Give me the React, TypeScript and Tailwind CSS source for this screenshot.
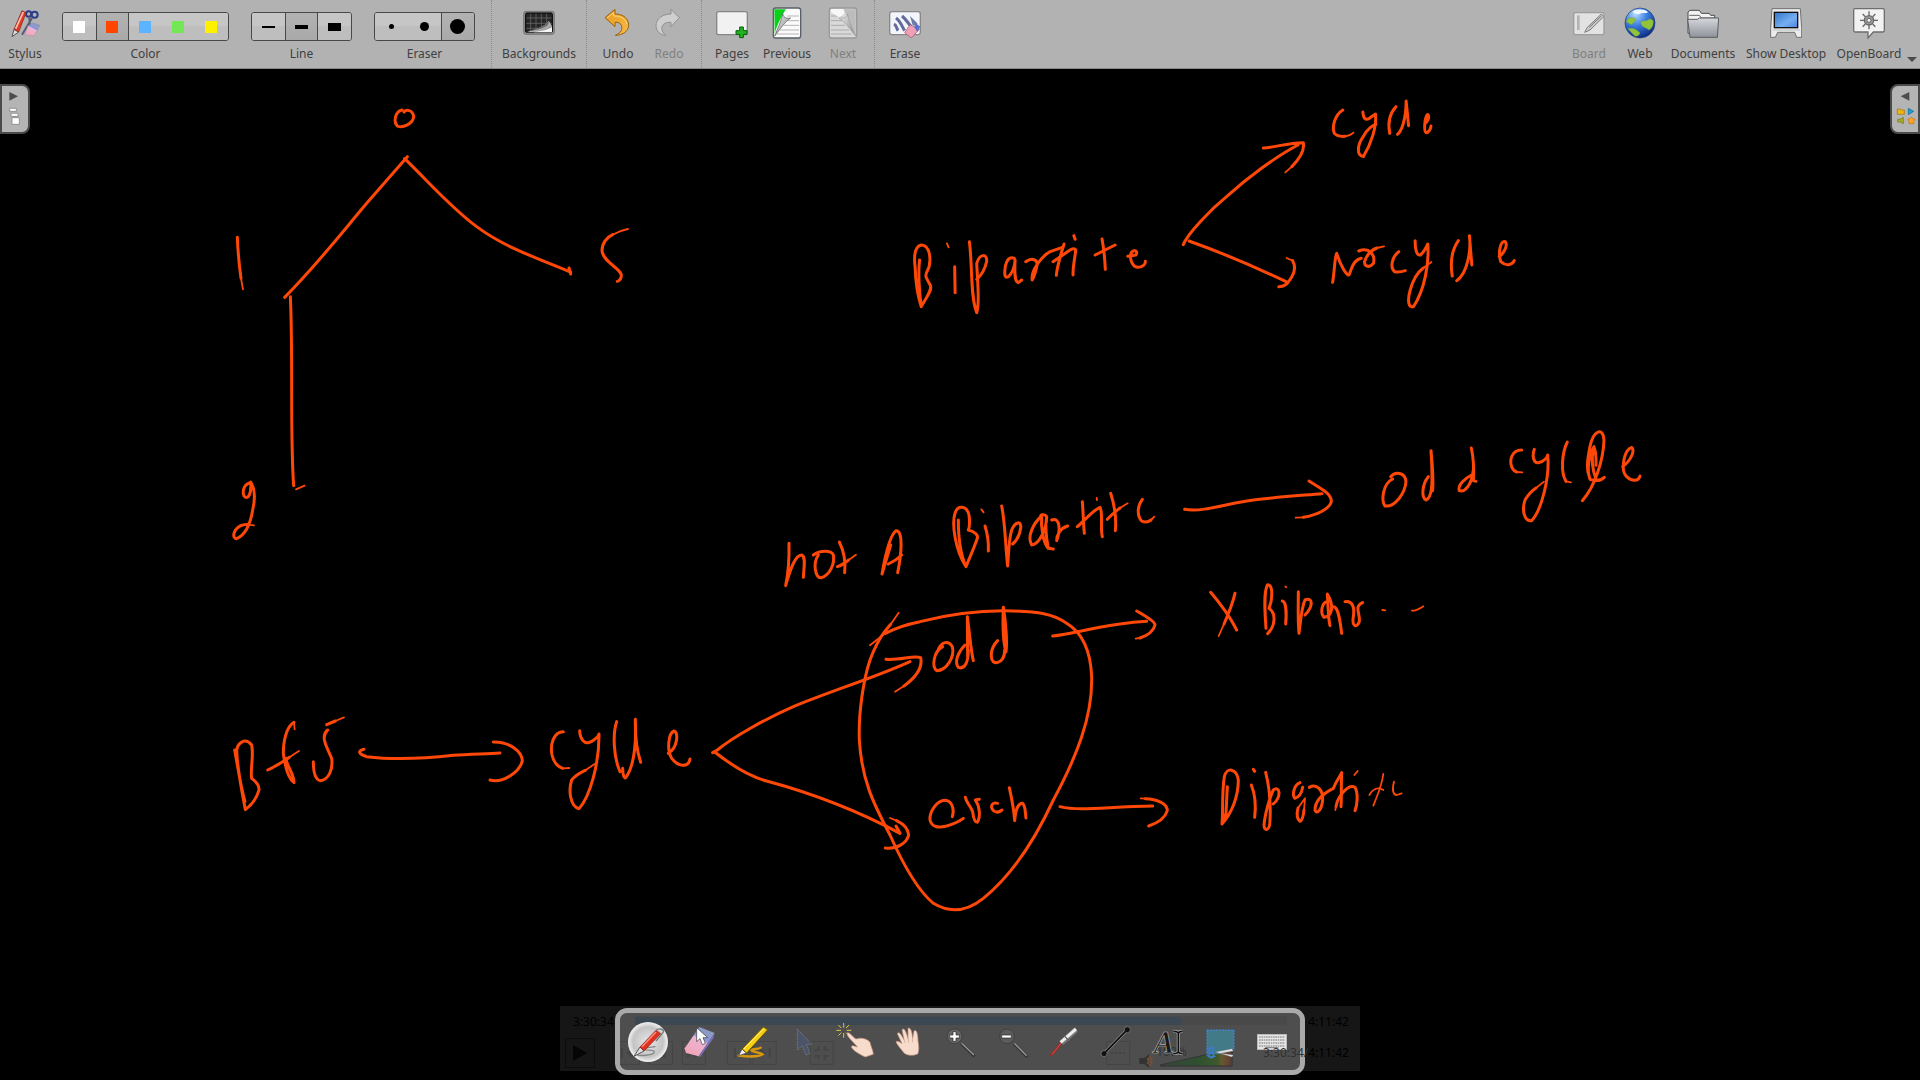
import React from 'react';

type IconProps = { box: string; children: React.ReactNode; size?: 'bar' | 'tool' };

const Icon = ({ box, children, size = 'bar' }: IconProps) => (
  <svg viewBox={box} aria-hidden="true" className={size === 'bar' ? 'size-8' : 'size-10'}>
    {children}
  </svg>
);

type ActionProps = { label: string; width: string; disabled?: boolean; children: React.ReactNode };

const Action = ({ label, width, disabled, children }: ActionProps) => (
  <button
    type="button"
    disabled={disabled}
    className={`flex shrink-0 flex-col items-center gap-[7px] pt-[7px] ${width} ${disabled ? 'text-[#808080]' : 'text-[#404040]'}`}
  >
    {children}
    <span className="text-xs leading-4 whitespace-nowrap">{label}</span>
  </button>
);

type Option = { name: string; mark: React.ReactNode; active?: boolean; edge?: string };

const Segments = ({ label, options }: { label: string; options: Option[] }) => (
  <div role="group" aria-label={label} className="flex shrink-0 flex-col items-center gap-[5px] pt-3 text-[#404040]">
    <div className="flex h-[29px] overflow-hidden rounded-[3px] border border-[#484848]">
      {options.map((o) => (
        <button
          key={o.name}
          type="button"
          aria-label={o.name}
          aria-pressed={!!o.active}
          className={`flex w-[33px] items-center justify-center border-[#484848] ${o.edge ?? ''} ${
            o.active
              ? 'bg-linear-to-b from-[#b2b2b2] to-[#a9a9a9]'
              : 'bg-linear-to-b from-[#c6c6c6] from-50% to-[#bebebe] to-50%'
          }`}
        >
          {o.mark}
        </button>
      ))}
    </div>
    <span className="text-xs leading-4">{label}</span>
  </div>
);

const Divider = () => <div className="w-px shrink-0 self-stretch border-l border-dotted border-[#8c8c8c]" />;

const colors: Option[] = [
  { name: 'White', mark: <span className="mr-px size-3 bg-white" /> },
  { name: 'Orange', mark: <span className="mr-px size-3 bg-[#ff4500]" />, active: true, edge: 'border-x' },
  { name: 'Blue', mark: <span className="mr-px size-3 bg-[#5cb3ff]" /> },
  { name: 'Green', mark: <span className="mr-px size-3 bg-[#74e854]" /> },
  { name: 'Yellow', mark: <span className="mr-px size-3 bg-[#fff000]" /> },
];
const lines: Option[] = [
  { name: 'Thin line', mark: <span className="h-0.5 w-[13px] bg-black" /> },
  { name: 'Medium line', mark: <span className="h-1 w-[13px] bg-black" />, active: true, edge: 'border-x' },
  { name: 'Thick line', mark: <span className="h-2 w-[13px] bg-black" /> },
];
const erasers: Option[] = [
  { name: 'Small eraser', mark: <span className="size-[5px] rounded-full bg-black" /> },
  { name: 'Medium eraser', mark: <span className="size-[9px] rounded-full bg-black" /> },
  { name: 'Large eraser', mark: <span className="mr-px size-[15px] rounded-full bg-black" />, active: true, edge: 'border-l' },
];

const Defs = () => (
  <svg className="absolute size-0" aria-hidden="true">
    <defs>
      <linearGradient id="orange" x1="0" y1="0" x2="1" y2="1">
        <stop offset="0" stopColor="#e89a1c" /><stop offset="1" stopColor="#f7bb4a" />
      </linearGradient>
      <radialGradient id="globe" cx=".35" cy=".2" r=".85">
        <stop offset="0" stopColor="#b9ddff" /><stop offset=".45" stopColor="#3c7fe0" /><stop offset="1" stopColor="#0b2780" />
      </radialGradient>
      <linearGradient id="folder" x1="0" y1="0" x2="0" y2="1">
        <stop offset="0" stopColor="#d5d7dc" /><stop offset="1" stopColor="#8f9299" />
      </linearGradient>
      <linearGradient id="screen" x1="0" y1="0" x2="1" y2="1">
        <stop offset="0" stopColor="#2f75c8" /><stop offset=".6" stopColor="#76aef0" /><stop offset="1" stopColor="#4a80e6" />
      </linearGradient>
      <linearGradient id="curl" x1="0" y1="0" x2="1" y2="1">
        <stop offset="0" stopColor="#eeeeee" /><stop offset="1" stopColor="#858585" />
      </linearGradient>
      <radialGradient id="disc" cx=".5" cy=".5" r=".5">
        <stop offset="0" stopColor="#e8e8e8" /><stop offset=".75" stopColor="#c4c4c4" /><stop offset="1" stopColor="#f2f2f2" />
      </radialGradient>
      <linearGradient id="rubber" x1=".2" y1="1" x2=".8" y2="0">
        <stop offset="0" stopColor="#f4a3b8" /><stop offset=".55" stopColor="#e9b5d2" /><stop offset=".6" stopColor="#8e95d8" /><stop offset="1" stopColor="#8a9fb8" />
      </linearGradient>
      <linearGradient id="volume" x1="0" y1="0" x2="1" y2="0">
        <stop offset="0" stopColor="#38443a" /><stop offset=".5" stopColor="#2f4f30" /><stop offset=".8" stopColor="#3d5a2c" /><stop offset=".86" stopColor="#6b572e" /><stop offset="1" stopColor="#5a3c38" />
      </linearGradient>
    </defs>
  </svg>
);

const Gear = () => (
  <g stroke="#666" strokeWidth="4" fill="none">
    <circle cx="987" cy="61" r="14" fill="#999" stroke="#666" />
    <circle cx="987" cy="61" r="6" fill="#f4f4f4" strokeWidth="3" />
    <path d="M987 34v12M987 76v12M960 61h12M1002 61h12M968 42l8 8M998 72l8 8M1006 42l-8 8M976 72l-8 8" />
  </g>
);

/* Pen strokes on the board. Each patch has its own origin and scale; light strokes are drawn finer. */
const ink: { at: string; strokes: string[]; light?: string[] }[] = [
  {
    at: 'translate(200 90) scale(.33333)',
    strokes: [
      'M606 60C585 65 580 95 592 108C608 116 640 100 641 80C638 58 618 58 612 66',
      'M622 200L500 340C420 435 350 525 254 622',
      'M614 206C700 290 750 350 830 410C910 470 1000 500 1112 546M1107 534L1112 552',
      'M112 442C114 490 118 530 123 565',
      'M1238 434C1220 442 1206 460 1206 482C1208 515 1262 535 1264 555C1264 565 1260 572 1252 574',
      'M271 620C275 700 275 760 275 900C275 1050 276 1120 281 1187',
      'M152 1178C135 1180 125 1200 132 1218C145 1232 155 1210 152 1176C168 1200 165 1230 158 1260C150 1310 135 1335 110 1346C95 1345 100 1320 120 1308C130 1304 136 1303 142 1304',
    ],
    light: ['M123 565L129 598', 'M1284 417C1268 420 1252 426 1238 434', 'M288 1198L314 1187', 'M142 1304L162 1306'],
  },
  {
    at: 'translate(900 90) scale(.40816 .33333)',
    strokes: [
      'M48 510C43 560 48 610 52 650C65 620 80 600 74 585C65 565 60 560 66 545C78 520 76 465 52 465C34 470 34 500 37 530C38 570 44 620 52 650',
      'M134 530L135 608',
      'M170 455C178 530 172 620 188 668C196 640 190 580 188 520C195 490 215 490 212 515C208 540 195 560 188 568',
      'M280 505C262 495 255 530 257 555C262 575 280 545 282 510C280 560 282 575 290 578L298 570',
      'M308 515C325 500 340 510 335 530C330 560 322 575 324 568C320 545 345 500 368 485L398 472',
      'M402 462C392 500 385 530 383 556M375 515L405 490C425 470 432 475 430 485C428 510 423 530 424 555M426 437L429 448',
      'M495 447C500 480 502 510 503 538M478 495L527 465',
      'M558 499L578 495C585 480 570 478 566 490C562 510 570 530 582 532C595 532 602 522 601 514',
      'M694 464C705 430 760 360 800 320C850 265 920 200 975 165M890 174C920 172 950 158 988 158C992 180 980 205 960 230',
      'M708 453C770 480 860 525 946 575M962 512C970 530 966 548 960 560C950 580 945 590 928 590',
      'M1085 60C1065 75 1058 110 1064 130C1070 138 1080 140 1090 139',
      'M1134 66C1135 85 1140 92 1150 85L1165 72C1168 110 1155 160 1135 200C1118 195 1120 165 1135 140C1145 115 1160 105 1166 103',
      'M1215 50C1200 70 1195 100 1200 130M1219 133C1228 125 1240 90 1240 33L1246 107',
      'M1287 100C1298 90 1296 72 1292 74C1285 85 1283 125 1289 128C1295 128 1300 118 1301 108',
      'M1060 577C1065 540 1065 500 1070 490C1080 530 1095 558 1100 555C1108 530 1112 510 1130 505',
      'M1124 483C1150 470 1165 495 1160 520C1150 535 1138 530 1138 515C1145 490 1155 480 1168 474',
      'M1222 485C1205 500 1200 535 1212 545C1222 547 1230 545 1238 542',
      'M1262 452C1262 475 1265 498 1275 495C1285 485 1290 470 1293 462C1297 520 1285 600 1258 650C1245 655 1243 630 1250 600C1258 565 1270 545 1282 534',
      'M1368 452C1352 480 1348 520 1353 558M1364 572C1390 550 1400 480 1395 437L1401 525',
      'M1468 500C1480 490 1490 465 1483 455C1470 450 1465 490 1472 515C1485 530 1500 525 1505 512',
    ],
    light: ['M115 460L119 472', 'M960 230L944 247', 'M947 504L962 512', 'M1090 139C1100 138 1106 134 1111 128', 'M1168 474L1186 469', 'M1282 534L1302 516'],
  },
  {
    at: 'translate(770 420) scale(.33333)',
    strokes: [
      'M57 370C58 420 55 460 47 497C60 450 75 405 95 405C108 410 102 440 100 472',
      'M145 405C128 430 135 475 155 473C180 465 195 430 190 405C185 390 150 390 130 405',
      'M208 366C220 390 228 420 224 458M202 440C215 436 226 428 236 420',
      'M336 462C345 410 360 345 378 332C400 330 395 400 383 458M355 432C370 425 385 415 395 405M336 462L362 375',
      'M565 300C565 340 570 400 588 440C555 390 545 310 555 280C562 255 590 255 597 285C600 310 600 320 595 330C615 335 625 345 622 355C612 385 600 410 588 440',
      'M645 318C652 340 656 370 655 393',
      'M695 258C706 310 706 380 713 438C716 400 716 360 725 330C735 305 755 300 752 325C748 350 740 362 728 372',
      'M815 288C790 310 770 350 785 375C805 375 830 330 830 290C825 280 805 285 815 290C812 320 820 370 835 385L850 387M830 290C825 320 828 350 835 385',
      'M845 300C870 290 872 330 860 362C860 345 870 325 893 318',
      'M937 245C940 280 940 310 943 340M922 320C945 300 970 270 990 262C1000 280 990 320 997 350',
      'M1022 220C1035 260 1040 290 1036 332M1012 298C1025 284 1038 274 1050 264',
      'M1117 238C1100 260 1102 290 1115 303C1125 308 1135 306 1143 300',
    ],
    light: ['M634 268L641 277M980 234L981 240', 'M236 420L258 404', 'M1050 264L1073 250', 'M1143 300L1153 290'],
  },
  {
    at: 'translate(1170 420) scale(.33333)',
    strokes: [
      'M44 268C100 278 180 248 250 240C330 230 400 226 456 221M417 183C450 205 485 220 484 245C478 268 440 285 400 292',
      'M668 177C640 190 632 240 645 258C675 262 705 220 708 185C705 155 675 155 662 170',
      'M783 92C788 140 790 180 788 212M775 170C758 190 752 230 768 240C785 235 790 200 783 92',
      'M904 84C912 120 912 150 910 182L918 184M905 165C885 175 862 195 868 212C885 218 905 195 910 150',
      'M1055 90C1025 90 1018 120 1025 140C1028 148 1034 154 1040 156',
      'M1093 88C1085 110 1092 130 1105 128C1125 125 1132 110 1133 105C1140 170 1115 270 1085 302C1062 305 1055 270 1065 240C1075 223 1086 212 1098 204',
      'M1192 66C1175 100 1172 160 1188 184',
      'M1258 170C1250 150 1250 130 1260 80C1270 30 1300 20 1302 60C1300 120 1275 200 1237 242M1272 80C1255 110 1250 150 1260 178C1280 185 1295 180 1303 172M1272 82C1280 100 1278 120 1278 136M1270 90C1263 120 1268 150 1278 178',
      'M1358 140C1385 120 1395 90 1385 82C1362 90 1350 150 1370 170C1385 185 1405 185 1410 168',
      'M122 517C150 550 180 590 200 630M195 520C188 550 176 580 162 612',
      'M288 625C285 580 280 520 292 495C310 490 308 540 297 565C320 580 315 620 293 641',
      'M337 543C348 545 350 580 347 612',
      'M385 515C385 560 383 600 387 640C392 600 395 560 405 540C430 530 430 560 405 585',
      'M470 545C455 550 450 580 462 592C485 590 495 560 472 522C475 570 475 600 480 617M490 560C505 560 510 600 515 640',
      'M525 545C545 540 555 560 550 590C545 620 560 625 568 605C572 580 550 560 578 548',
    ],
    light: ['M400 292L377 293', 'M1040 156L1057 157', 'M1098 204L1122 185', 'M1188 184L1203 187', 'M162 612L146 648', 'M346 499L349 502M637 570L646 571', 'M726 572C740 572 750 565 760 559'],
  },
  {
    at: 'translate(220 690) scale(.33333)',
    strokes: [
      'M44 180C55 240 62 290 75 335M50 185C50 160 75 140 95 165C102 200 90 240 95 265C115 280 118 290 117 300C110 325 95 345 76 359C65 300 52 240 50 180',
      'M222 97C200 110 190 150 190 190C195 230 205 265 222 278C222 250 200 230 198 205M143 240C170 228 190 214 208 202',
      'M320 104L346 93M323 120C300 140 320 170 335 205C340 240 325 270 300 272C285 268 280 240 280 215',
      'M432 178C412 182 415 192 440 200C520 210 620 205 700 196C750 192 800 192 840 189M820 156C870 155 905 185 907 212C900 245 850 280 810 270',
      'M1030 125C1000 125 990 165 996 195C1001 215 1012 230 1028 235',
      'M1079 122C1080 150 1095 160 1105 158C1120 155 1135 140 1137 132C1138 220 1110 320 1077 356C1050 350 1045 300 1055 270C1068 254 1082 248 1096 241',
      'M1190 95C1178 130 1180 200 1200 245M1208 235C1208 260 1215 268 1218 262C1240 230 1250 180 1246 88C1245 140 1250 180 1262 217',
      'M1345 190C1375 170 1375 125 1362 123C1345 130 1340 180 1355 205C1375 230 1405 235 1410 207',
    ],
    light: ['M224 118L222 97M208 202L237 183', 'M346 93L372 82', 'M1028 235L1048 234', 'M1096 241L1124 222'],
  },
  {
    at: 'translate(700 590) scale(.33333)',
    strokes: [
      'M38 488L52 480C100 440 200 385 280 350C400 300 520 265 630 215M558 208C600 212 640 195 662 203C668 230 650 260 612 288',
      'M44 486C100 530 150 560 200 573C300 600 450 650 600 730L588 708M590 692C610 702 625 718 626 735C620 760 590 778 556 774',
      'M556 130C590 112 625 102 660 95C760 70 850 60 940 63C1010 65 1060 70 1100 100C1150 130 1172 190 1175 260C1178 380 1130 500 1060 630C1000 760 930 860 850 925C800 965 750 970 700 940C640 890 590 780 570 735C520 640 485 570 478 450C475 370 490 270 510 210C522 178 536 148 556 122L572 103',
      'M728 170C700 185 695 230 710 242C740 242 765 200 757 170C745 150 725 155 715 178',
      'M820 212C812 180 808 120 802 80L803 200M795 165C775 185 762 215 775 232C795 240 805 215 805 180',
      'M910 52C918 100 922 160 918 185C910 160 908 100 910 52M893 152C870 175 868 210 885 218C905 218 915 200 914 180',
      'M757 680C764 655 755 632 735 631C710 632 688 665 690 690C695 712 715 714 740 708C760 702 778 694 790 685',
      'M796 622C800 640 812 648 818 665C820 685 824 697 832 697C842 680 840 650 826 630L838 628',
      'M893 640C875 635 870 650 880 662C890 670 900 665 906 660',
      'M928 593C935 625 942 660 944 692C946 660 955 640 968 640C978 650 975 670 978 684',
    ],
    light: ['M510 166L556 130', 'M572 103L596 68', 'M612 288L585 305', 'M570 684L590 692'],
  },
  {
    at: 'translate(1040 580) scale(.33333)',
    strokes: [
      'M38 168C110 160 200 130 320 124M290 93C320 110 345 125 345 135C340 155 318 168 300 174',
      'M60 680C120 695 200 680 338 678M316 656C350 657 382 670 382 692C375 715 350 730 326 738',
      'M562 620L558 700L546 732C575 700 595 650 595 600C590 565 560 560 553 590C545 640 550 690 546 732',
      'M640 568L644 574M634 615C644 640 648 680 644 712',
      'M677 577C688 620 692 680 690 720C690 755 672 755 672 735C675 700 690 650 700 630C720 615 725 650 700 672',
      'M780 608C762 615 755 645 765 655C775 652 785 640 788 622M792 690C790 710 786 722 780 724C770 716 770 700 774 684',
      'M808 622C830 610 850 630 848 660C845 690 830 705 825 690C825 660 850 640 880 625C890 600 900 590 905 578C903 620 905 650 903 680',
      'M888 680C892 650 925 610 945 622C955 640 952 675 945 692',
    ],
    light: ['M300 174L287 176', 'M302 655L316 656', 'M774 684L795 655L792 690', 'M953 573L943 585M886 690L888 680', 'M988 645C1000 625 1015 620 1030 630M1030 582C1025 620 1010 650 1000 677', 'M1062 605C1055 630 1060 645 1070 645L1085 640'],
  },
];

const Board = () => (
  <svg viewBox="0 69 1920 1011" className="block w-full flex-1" role="img" aria-label="Bipartite graph notes">
    {ink.map((patch) => (
      <g key={patch.at} transform={patch.at} fill="none" stroke="#ff4808" strokeLinecap="round" strokeLinejoin="round">
        {patch.strokes.map((d) => (
          <path key={d} d={d} strokeWidth="3" vectorEffect="non-scaling-stroke" />
        ))}
        {patch.light?.map((d) => (
          <path key={d} d={d} strokeWidth="1.8" vectorEffect="non-scaling-stroke" />
        ))}
      </g>
    ))}
  </svg>
);

const tools: { name: string; box: string; art: React.ReactNode }[] = [
  {
    name: 'Pen',
    box: '234 63 120 120',
    art: (
      <>
        <circle cx="294" cy="123" r="60" fill="url(#disc)" />
        <path d="M262 163C290 165 318 160 312 150C300 145 282 150 286 143C295 137 310 140 316 136" fill="none" stroke="#888" strokeWidth="4" />
        <path d="M252 166L270 138L282 150Z" fill="#ddd" stroke="#555" strokeWidth="3" />
        <path d="M270 138L318 88L332 98L282 150Z" fill="#e03020" stroke="#8c1c12" strokeWidth="2" />
        <path d="M276 137L318 93" stroke="#ff9080" strokeWidth="4" />
        <path d="M318 88C325 80 340 84 341 92L318 120" fill="none" stroke="#777" strokeWidth="4" />
      </>
    ),
  },
  {
    name: 'Eraser',
    box: '390 63 120 120',
    art: (
      <>
        <path d="M404 142L448 78L494 96L446 166L408 156Z" fill="url(#rubber)" />
        <path d="M446 166L494 96L490 112L450 168Z" fill="#7d6fc0" />
        <path d="M440 80V122L450 113L457 131L466 127L459 110H473Z" fill="#fff" stroke="#333" strokeWidth="2" />
      </>
    ),
  },
  {
    name: 'Highlighter',
    box: '546 63 120 120',
    art: (
      <>
        <path d="M566 164C600 168 630 166 638 160C632 154 604 154 604 148C610 142 624 146 632 140" fill="none" stroke="#d8960c" strokeWidth="7" strokeLinecap="round" />
        <path d="M566 164L576 144L590 156Z" fill="#eee" stroke="#444" strokeWidth="2" />
        <path d="M576 144L640 78L653 86L590 156Z" fill="#f6cf10" stroke="#6b5500" strokeWidth="3" />
        <path d="M582 144L642 82" stroke="#fff29a" strokeWidth="3" />
      </>
    ),
  },
  {
    name: 'Select',
    box: '702 63 120 120',
    art: <path d="M742 84V148L756 134L768 162L780 157L769 130H785Z" fill="#4b5468" stroke="#8a91a2" strokeWidth="2" strokeDasharray="3 2" />,
  },
  {
    name: 'Interact',
    box: '854 63 120 120',
    art: (
      <>
        <path d="M877 66v14M877 96v14M855 88h14M886 88h14M861 72l9 9M884 95l6 6M893 72l-9 9M870 95l-9 9" stroke="#f5e04a" strokeWidth="2.5" />
        <path d="M887 96C894 92 900 104 914 114C930 108 950 114 956 124C960 140 966 150 966 160L942 168C924 160 904 148 900 138C902 130 910 136 918 138C908 124 886 108 887 96Z" fill="#f7dccb" stroke="#b98b78" strokeWidth="2" />
      </>
    ),
  },
  {
    name: 'Scroll page',
    box: '1014 63 120 120',
    art: (
      <>
        <path d="M1062 156C1052 142 1040 130 1038 122C1042 118 1050 124 1056 128L1042 98C1046 90 1052 98 1062 116L1056 86C1062 80 1068 90 1074 112L1074 82C1080 78 1086 88 1088 112L1092 90C1098 84 1104 94 1104 120C1108 140 1106 150 1104 158C1090 166 1072 164 1062 156Z" fill="#f7dccb" stroke="#b98b78" strokeWidth="2" />
        <path d="M1062 116L1066 126M1074 112L1076 124M1088 112L1087 124" stroke="#c49a88" strokeWidth="2" />
      </>
    ),
  },
  {
    name: 'Zoom in',
    box: '-30 63 120 120',
    art: (
      <>
        <circle cx="14" cy="106" r="22" fill="#6c6c6c" stroke="#3e3e3e" strokeWidth="3" opacity=".8" />
        <path d="M34 128L74 166" stroke="#333" strokeWidth="9" /><path d="M35 127L72 162" stroke="#999" strokeWidth="4" />
        <path d="M9 92h9v10h10v9H18v10H9V111H-1v-9H9Z" fill="#fff" stroke="#222" strokeWidth="2" />
      </>
    ),
  },
  {
    name: 'Zoom out',
    box: '126 63 120 120',
    art: (
      <>
        <circle cx="171" cy="106" r="22" fill="#606060" stroke="#3e3e3e" strokeWidth="3" opacity=".8" />
        <path d="M192 128L232 168" stroke="#333" strokeWidth="9" /><path d="M193 127L230 164" stroke="#999" strokeWidth="4" />
        <path d="M155 102h29v9h-29Z" fill="#fff" stroke="#222" strokeWidth="2" />
      </>
    ),
  },
  {
    name: 'Laser pointer',
    box: '282 63 120 120',
    art: (
      <>
        <path d="M304 162L338 122" stroke="#9c2c26" strokeWidth="8" strokeLinecap="round" />
        <path d="M306 160L336 124" stroke="#d8504a" strokeWidth="3" />
        <path d="M334 126L378 86" stroke="#777" strokeWidth="17" /><path d="M332 124L378 84" stroke="#eee" strokeWidth="9" />
        <path d="M344 106L358 120" stroke="#666" strokeWidth="4" />
      </>
    ),
  },
  {
    name: 'Line',
    box: '438 63 120 120',
    art: (
      <>
        <path d="M462 158L532 86" stroke="#999" strokeWidth="9" /><circle cx="462" cy="158" r="9" fill="#111" stroke="#888" strokeWidth="2" />
        <circle cx="532" cy="86" r="9" fill="#111" stroke="#888" strokeWidth="2" /><path d="M462 158L532 86" stroke="#111" strokeWidth="6" />
      </>
    ),
  },
  {
    name: 'Text',
    box: '594 63 120 120',
    art: (
      <>
        <text x="611" y="157" fontFamily="'Liberation Serif', serif" fontStyle="italic" fontWeight="700" fontSize="92" fill="#181818" stroke="#b0b0b0" strokeWidth="2">A</text>
        <path d="M670 91C678 91 684 92 685 97C686 92 690 91 698 91M685 96V152M670 158C678 158 684 157 685 152C686 157 690 158 698 158" fill="none" stroke="#b0b0b0" strokeWidth="9" />
        <path d="M670 91C678 91 684 92 685 97C686 92 690 91 698 91M685 96V152M670 158C678 158 684 157 685 152C686 157 690 158 698 158" fill="none" stroke="#111" strokeWidth="5" />
      </>
    ),
  },
  {
    name: 'Capture',
    box: '750 63 120 120',
    art: (
      <>
        <path d="M771 87H852V144L810 160H771Z" fill="#427a88" />
        <path d="M771 87H852V144M771 87V166H800" fill="none" stroke="#3c86ea" strokeWidth="3" strokeDasharray="6 3" />
        <circle cx="784" cy="147" r="7" fill="none" stroke="#3b7bd0" strokeWidth="5" /><circle cx="784" cy="163" r="7" fill="none" stroke="#3b7bd0" strokeWidth="5" />
        <path d="M796 153L846 143L850 150L812 157L850 162L846 168Z" fill="#e2e8e8" stroke="#667" strokeWidth="1" />
      </>
    ),
  },
  {
    name: 'Virtual keyboard',
    box: '906 63 120 120',
    art: (
      <>
        <rect x="922" y="100" width="88" height="46" fill="#e6e6e6" stroke="#bdbdbd" strokeWidth="2" />
        <path d="M927 108H1005M927 117H1005M927 126H1005M927 135H1005" stroke="#777" strokeWidth="3" strokeDasharray="5 2" />
        <path d="M945 140H985" stroke="#777" strokeWidth="3" />
      </>
    ),
  },
];

/* Controls of the faint media player that show through the tool palette. */
const PlayerControls = () => (
  <svg viewBox="620 1013 681 57" className="absolute inset-0 size-full" aria-hidden="true">
    <rect x="635" y="1016" width="653" height="9" rx="3" fill="#494949" />
    <path d="M635 1017H1179Q1182 1017 1182 1020V1022Q1182 1025 1179 1025H635Z" fill="#3b4853" />
    <g fill="none" stroke="#444">
      <path d="M618 1041.500H639.500V1064.500H618M649.500 1041.500H672.500V1064.500H649.500ZM682.500 1041.500H705.500V1064.500H682.500ZM727.500 1041.500H750.500V1064.500H727.500ZM753.500 1041.500H776.500V1064.500H753.500ZM810.500 1041.500H833.500V1064.500H810.500ZM1107.500 1041.500H1130.500V1064.500H1107.500Z" />
      <path d="M622 1048V1058M735 1048V1058M770 1048V1058" strokeWidth="2" />
      <path d="M815 1050H819V1046M825 1046V1050H829M815 1056H819V1060M825 1060V1056H829" strokeWidth="2" />
      <path d="M1112 1053H1126" strokeWidth="2" strokeDasharray="2 2" />
    </g>
    <path d="M633 1048V1058L626 1053ZM746 1048V1058L739 1053ZM759 1048V1058L766 1053ZM656 1048H666V1058H656ZM687 1048V1058L694 1053ZM694 1048V1058L701 1053Z" fill="#444" />
    <path d="M1140 1058H1145L1150 1054V1068L1145 1064H1140Z" fill="#333" />
    <path d="M1148 1058Q1151 1061 1148 1064M1150 1056Q1155 1061 1150 1066" fill="none" stroke="#70503c" strokeWidth="2" />
    <path d="M1161 1065L1233 1049V1066H1161Z" fill="url(#volume)" stroke="#343434" />
    <text x="1157" y="1056" fontSize="12" fill="#343434">100%</text>
  </svg>
);

export default function App() {
  return (
    <div className="relative flex h-screen flex-col overflow-hidden bg-black font-['Noto_Sans',sans-serif]">
      <Defs />
      <header className="flex h-[69px] shrink-0 items-start border-b border-[#8a8a8a] bg-[#b2b2b2]">
        <Action label="Stylus" width="w-[50px]">
          <Icon box="27 21 96 96">
            <circle cx="104" cy="44" r="9" fill="none" stroke="#2c3c86" strokeWidth="6" />
            <circle cx="86" cy="42" r="8" fill="none" stroke="#2c3c86" strokeWidth="6" />
            <path d="M96 54L66 104M88 50L90 84" stroke="#555e70" strokeWidth="6" />
            <path d="M84 78L98 68L120 76L102 108L74 104Z" fill="url(#rubber)" stroke="#8a7a9a" strokeWidth="1" />
            <path d="M36 110L42 88L56 96Z" fill="#ddd" stroke="#555" strokeWidth="3" />
            <path d="M42 88L66 32L78 38L56 96Z" fill="#e23b25" stroke="#7c2018" strokeWidth="2" />
            <path d="M47 86L70 36" stroke="#ffc0b4" strokeWidth="5" />
          </Icon>
        </Action>
        <div className="flex gap-[22px] pr-4 pl-3">
          <Segments label="Color" options={colors} />
          <Segments label="Line" options={lines} />
          <Segments label="Eraser" options={erasers} />
        </div>
        <Divider />
        <Action label="Backgrounds" width="w-[94px]">
          <Icon box="129 21 96 96">
            <rect x="131" y="34" width="92" height="69" rx="7" fill="#888" stroke="#777" strokeWidth="3" />
            <rect x="137" y="39" width="80" height="58" rx="4" fill="#262626" stroke="#000" strokeWidth="3" />
            <path d="M139 54H215M139 70H215M139 85H215M152 41V96M168 41V96M184 41V96M200 41V96" stroke="#737373" strokeWidth="2" />
            <path d="M140 97C165 86 198 80 206 62L216 78V97Z" fill="url(#curl)" />
            <path d="M146 94C172 84 196 80 206 62C210 78 190 86 146 94Z" fill="#666" />
            <path d="M160 97C185 94 206 88 216 82V97Z" fill="#f5f5f5" />
          </Icon>
        </Action>
        <Divider />
        <div className="flex pr-[9px] pl-[3px]">
          <Action label="Undo" width="w-14">
            <Icon box="366 21 96 96">
              <path d="M375 53L405 28V42C430 42 446 56 446 76C445 94 430 105 406 106C424 98 428 88 424 76C420 68 414 66 405 67V80Z" fill="url(#orange)" stroke="#966214" strokeWidth="3" strokeLinejoin="round" />
              <path d="M382 53L401 38V48C422 47 438 57 440 72" fill="none" stroke="#ffd682" strokeWidth="3" />
            </Icon>
          </Action>
          <Action label="Redo" width="w-[46px]" disabled>
            <Icon box="520 21 96 96">
              <path d="M599 53L574 28V42C548 42 529 56 529 78C530 94 542 105 558 106C548 96 544 90 548 78C552 70 560 66 574 67V80Z" fill="#cecece" stroke="#909090" strokeWidth="3" strokeLinejoin="round" />
            </Icon>
          </Action>
        </div>
        <Divider />
        <div className="flex px-[3px]">
          <Action label="Pages" width="w-[54px]">
            <Icon box="708 21 96 96">
              <rect x="710" y="35" width="92" height="69" rx="6" fill="#f1f1f1" stroke="#858585" strokeWidth="4" />
              <path d="M779 81H790V92H801V103H790V113H779V103H768V92H779Z" fill="#21b321" stroke="#0a5c0a" strokeWidth="3" />
            </Icon>
          </Action>
          <Action label="Previous" width="w-14">
            <Icon box="873 21 96 96">
              <rect x="880" y="24" width="82" height="90" rx="7" fill="#fbfbfb" stroke="#59606a" strokeWidth="4" />
              <path d="M922 48H957M922 62H957M912 76H957M900 90H957M890 102H957" stroke="#b5b5b5" strokeWidth="3" />
              <path d="M883 28H918C908 42 890 78 884 102Z" fill="#0bd01b" />
              <path d="M884 108C896 80 905 58 908 42C912 54 920 56 932 54C914 66 900 88 884 108Z" fill="url(#curl)" stroke="#555" strokeWidth="2" />
            </Icon>
          </Action>
          <Action label="Next" width="w-14" disabled>
            <Icon box="1038 21 96 96">
              <rect x="1045" y="24" width="82" height="90" rx="7" fill="#d9d9d9" stroke="#999" strokeWidth="4" />
              <path d="M1050 48H1084M1050 62H1084M1050 76H1092M1050 90H1104M1050 102H1112" stroke="#aaa" strokeWidth="3" />
              <path d="M1050 27H1086C1096 34 1088 48 1074 52C1060 42 1052 38 1050 36Z" fill="#f7f7f7" />
              <path d="M1088 28H1124V106Z" fill="#bcbcbc" />
              <path d="M1124 108C1112 80 1100 56 1100 42C1096 54 1088 56 1074 54C1092 66 1108 88 1124 108Z" fill="url(#curl)" stroke="#999" strokeWidth="2" />
            </Icon>
          </Action>
        </div>
        <Divider />
        <Action label="Erase" width="w-[60px]">
          <Icon box="1227 21 96 96">
            <rect x="1229" y="35" width="92" height="69" rx="7" fill="#f3f5fb" stroke="#888" strokeWidth="4" />
            <path d="M1242 72C1250 76 1250 86 1254 92M1248 54C1262 64 1266 80 1274 92M1266 48C1280 60 1284 70 1294 80" fill="none" stroke="#626b9b" strokeWidth="9" />
            <path d="M1290 48L1312 70V78L1298 76Z" fill="#6d7da8" />
            <path d="M1274 98L1290 74L1318 88L1294 114Z" fill="#f0a0b4" stroke="#a04d68" strokeWidth="2" />
            <path d="M1302 80L1310 72L1321 80L1312 96Z" fill="#5a6fd0" />
          </Icon>
        </Action>
        <div className="ml-auto flex">
          <Action label="Board" width="w-[50px]" disabled>
            <Icon box="99 21 96 96">
              <rect x="101" y="38" width="91" height="66" rx="6" fill="#e2e2e2" stroke="#9d9d9d" strokeWidth="4" />
              <path d="M111 46H119V90H111Z" fill="#b4b4b4" />
              <path d="M134 97L142 82L184 42L191 50L150 90Z" fill="#c9c9c9" stroke="#808080" strokeWidth="3" />
              <path d="M148 82L184 48" stroke="#777" strokeWidth="3" />
            </Icon>
          </Action>
          <Action label="Web" width="w-[52px]">
            <Icon box="252 21 96 96">
              <circle cx="300" cy="69" r="45" fill="url(#globe)" stroke="#173572" strokeWidth="2" />
              <path d="M276 36C288 26 314 26 324 36C316 44 306 34 300 42C290 46 284 38 276 36Z" fill="#eef7ff" />
              <path d="M258 66C262 54 274 50 286 56C290 64 278 66 276 74C268 74 264 66 258 66ZM302 66C312 60 322 64 330 56L340 62C340 76 336 86 326 90C318 82 302 82 302 66ZM264 86C280 82 290 90 300 98C300 106 290 110 284 108Z" fill="#91c43a" stroke="#66962c" strokeWidth="1" />
            </Icon>
          </Action>
          <Action label="Documents" width="w-[74px]">
            <Icon box="441 21 96 96">
              <path d="M444 100V36L450 31H478L484 40H508L512 46H524V96Z" fill="#f2f2f2" stroke="#4b4b4b" strokeWidth="3" />
              <path d="M448 46H478L484 54H526" fill="none" stroke="#666" strokeWidth="3" />
              <path d="M450 112L443 58H472L478 54H536L532 112Z" fill="url(#folder)" stroke="#5a5c61" strokeWidth="3" />
            </Icon>
          </Action>
          <Action label="Show Desktop" width="w-[92px]">
            <Icon box="690 21 96 96">
              <path d="M696 26H781L785 86V112H770L764 97H713L706 112H692V86Z" fill="#ececec" stroke="#717171" strokeWidth="3" />
              <rect x="703" y="37" width="70" height="46" fill="url(#screen)" stroke="#111" strokeWidth="4" />
              <path d="M698 90H780" stroke="#aaa" strokeWidth="2" />
            </Icon>
          </Action>
          <Action label="OpenBoard" width="w-[74px]">
            <Icon box="939 21 96 96">
              <path d="M945 26H1029Q1033 26 1033 31V91Q1033 96 1029 96H1000L984 114V96H945Q941 96 941 91V31Q941 26 945 26Z" fill="#f2f2f2" stroke="#6e6e6e" strokeWidth="4" />
              <Gear />
            </Icon>
          </Action>
          <button type="button" aria-label="More" className="flex w-3.5 items-end pt-14 pl-px">
            <svg viewBox="0 0 10 5" className="h-[5px] w-2.5"><path d="M0 0H10L5 5Z" fill="#4a4a4a" /></svg>
          </button>
        </div>
      </header>

      <main className="relative flex min-h-0 flex-1">
        <Board />

        <button type="button" aria-label="Open pages panel" className="absolute top-[15px] left-0 h-[50px] w-[30px] rounded-r-lg border-2 border-[#4a4a4a] bg-[#b4b4b4]">
          <svg viewBox="6 258 78 138" className="size-full" aria-hidden="true">
            <path d="M28 276L54 289L28 302Z" fill="#4c4c4c" />
            <g fill="#fff" stroke="#777" strokeWidth="2"><path d="M29 325H49V334H29ZM33 340H54V349H33ZM36 353H58V373H36Z" /></g>
          </svg>
        </button>
        <button type="button" aria-label="Open library panel" className="absolute top-[15px] right-0 h-[50px] w-[30px] rounded-l-lg border-2 border-[#4a4a4a] bg-[#b4b4b4]">
          <svg viewBox="1056 258 78 138" className="size-full" aria-hidden="true">
            <path d="M1108 276L1082 289L1108 302Z" fill="#4c4c4c" />
            <path d="M1072 327H1080L1084 330H1093V343H1072Z" fill="#f0b510" stroke="#8c7410" strokeWidth="2" />
            <path d="M1105 325L1121 334L1105 344Z" fill="#18a0d8" stroke="#12608c" strokeWidth="2" />
            <path d="M1073 358H1080L1090 352V371L1080 366H1073Z" fill="#a6a82a" stroke="#747812" strokeWidth="2" />
            <path d="M1114 351L1118 356L1125 358L1121 364L1121 371H1107L1107 364L1103 358L1110 356Z" fill="#ffa41c" stroke="#c56c10" strokeWidth="2" />
          </svg>
        </button>

        <div className="absolute inset-x-0 bottom-[9px] flex justify-center">
          <div className="h-[65px] w-[800px] bg-[#161616]" />
        </div>
        <div className="absolute inset-x-0 bottom-[5px] flex justify-center">
          <div role="toolbar" aria-label="Drawing tools" className="relative flex h-[67px] items-center justify-center rounded-xl border-[5px] border-[#a9a9a9] bg-[#4e4e4e] px-0.5">
            <PlayerControls />
            {tools.map((t) => (
              <button key={t.name} type="button" aria-label={t.name} className="relative flex w-[52px] justify-center">
                <Icon box={t.box} size="tool">{t.art}</Icon>
              </button>
            ))}
          </div>
        </div>
        <div className="pointer-events-none absolute inset-x-0 bottom-[9px] flex justify-center">
          <div className="flex h-[65px] w-[800px] flex-col justify-between pt-2 pr-[11px] pl-[5px] text-xs leading-4 text-black">
            <div className="flex items-center justify-between pl-2">
              <span>3:30:34</span>
              <span>4:11:42</span>
            </div>
            <div className="flex items-center justify-between pb-[3px]">
              <span className="flex size-[30px] items-center justify-center border border-[#0c0c0c]">
                <svg viewBox="0 0 14 16" className="h-4 w-3.5"><path d="M0 0L14 8L0 16Z" fill="#050505" /></svg>
              </span>
              <span><span className="text-[#303030]">3:30:34/</span>4:11:42</span>
            </div>
          </div>
        </div>
      </main>
    </div>
  );
}
